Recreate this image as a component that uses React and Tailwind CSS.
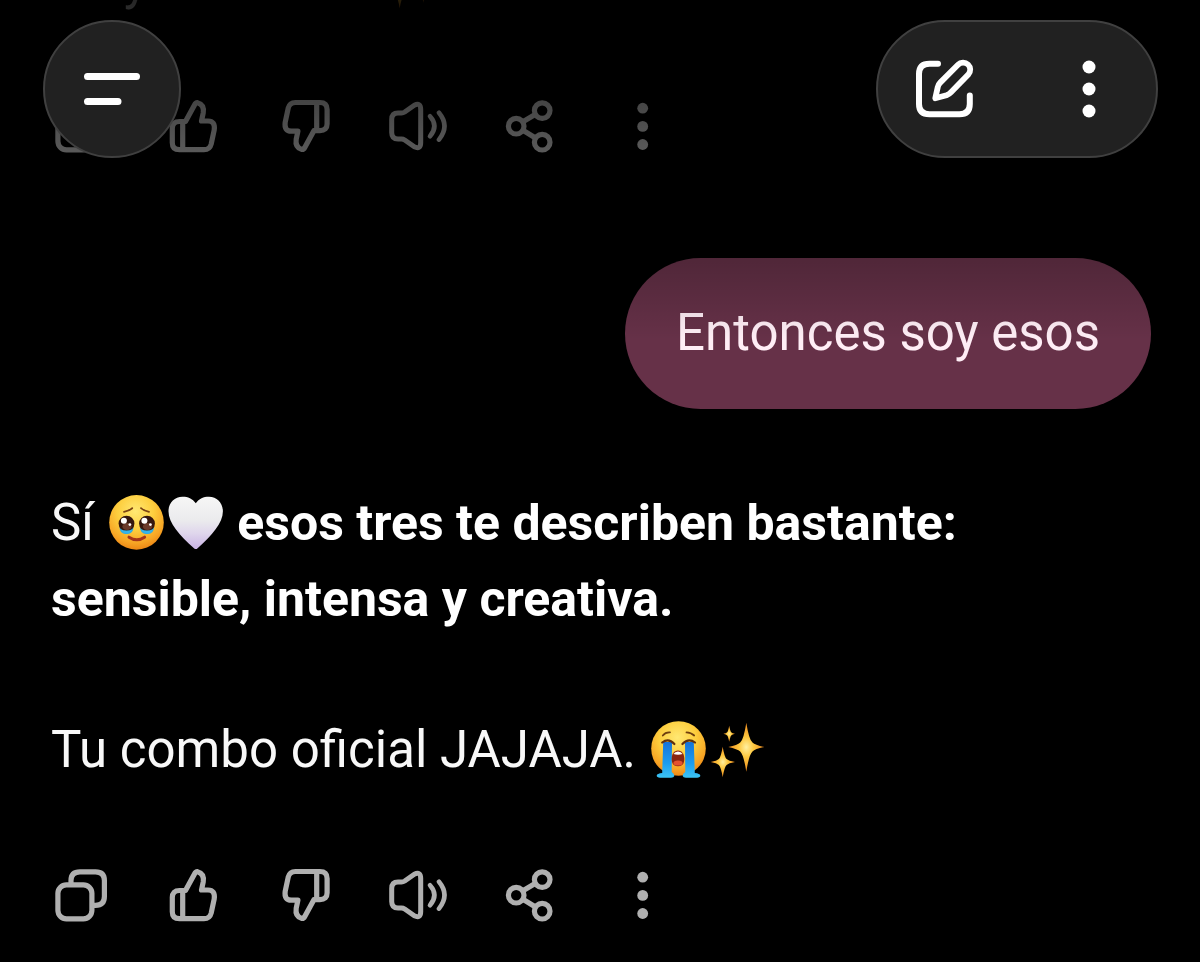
import { useId } from 'react'

function CopyIcon() {
  return (
    <svg viewBox="0 0 60 60" className="size-15" fill="none" stroke="currentColor" strokeWidth="5.2" strokeLinecap="round" strokeLinejoin="round">
      <rect x="6.9" y="19.8" width="34" height="34" rx="8.5" />
      <path d="M20 18.5V15.5Q20 6.8 29 6.8H44.5Q53.4 6.8 53.4 15.5V31.5Q53.4 40.3 44.5 40.3H42" />
    </svg>
  )
}

const thumbPath =
  'M20 25.5H16.5Q9.3 25.5 9.3 32.5V46.7Q9.3 53.7 16.5 53.7H41Q46.8 53.7 48.2 48L51.2 34Q52.5 25 45 25H38.5L40.2 17Q41.5 8.5 34.5 6.7Q32.8 6.5 31.5 9L22.5 25.5H19.7V53.7'

function ThumbUpIcon() {
  return (
    <svg viewBox="0 0 60 60" className="size-15" fill="none" stroke="currentColor" strokeWidth="5.2" strokeLinecap="round" strokeLinejoin="round">
      <path d={thumbPath} />
    </svg>
  )
}

function ThumbDownIcon() {
  return (
    <svg viewBox="0 0 60 60" className="size-15" fill="none" stroke="currentColor" strokeWidth="5.2" strokeLinecap="round" strokeLinejoin="round">
      <path d={thumbPath} transform="rotate(180 30.7 30.1)" />
    </svg>
  )
}

function SpeakerIcon() {
  return (
    <svg viewBox="0 0 60 60" className="size-15" fill="none" stroke="currentColor" strokeWidth="5" strokeLinecap="round" strokeLinejoin="round">
      <path d="M4.7 23.5Q4.7 17 11 17H14.5Q16.2 17 17.7 16L27.3 9.2Q33.7 6.2 33.7 13.5V46.5Q33.7 53.8 27.3 50.8L17.7 44Q16.2 43 14.5 43H11Q4.7 43 4.7 36.5Z" />
      <path d="M43 20.3Q51.8 30 43 40.3" strokeWidth="4.6" />
      <path d="M52 16.7Q63 30 52 43.6" strokeWidth="4.6" />
    </svg>
  )
}

function ShareIcon() {
  return (
    <svg viewBox="0 0 60 60" className="size-15" fill="none" stroke="currentColor" strokeWidth="5.2">
      <circle cx="17.2" cy="30.2" r="7.8" />
      <circle cx="43.200" cy="14.600" r="7.800" />
      <circle cx="43.200" cy="46.200" r="7.800" />
      <path d="M23.500 26L36.500 18.200M23.500 34L36.500 42" />
    </svg>
  )
}

function MoreIcon() {
  return (
    <svg viewBox="0 0 60 60" className="size-15" fill="currentColor">
      <circle cx="31.7" cy="12.2" r="5.4" />
      <circle cx="31.7" cy="30.4" r="5.4" />
      <circle cx="31.7" cy="48.5" r="5.4" />
    </svg>
  )
}

const actions = [
  { label: 'Copiar', Icon: CopyIcon },
  { label: 'Buena respuesta', Icon: ThumbUpIcon },
  { label: 'Mala respuesta', Icon: ThumbDownIcon },
  { label: 'Leer en voz alta', Icon: SpeakerIcon },
  { label: 'Compartir', Icon: ShareIcon },
  { label: 'Más', Icon: MoreIcon },
]

function MessageActions() {
  return (
    <div className="mt-[77px] flex gap-[52px] text-[#b0b0b0]">
      {actions.map(({ label, Icon }) => (
        <button key={label} type="button" aria-label={label}>
          <Icon />
        </button>
      ))}
    </div>
  )
}

function Emoji({ label, children }) {
  return (
    <svg viewBox="0 0 59 59" role="img" aria-label={label} className="inline-block size-[59px] align-[-12px]">
      {children}
    </svg>
  )
}

function FaceGradient({ id }) {
  return (
    <radialGradient id={id} cx="0.48" cy="0.3" r="0.74">
      <stop offset="0" stopColor="#ffe873" />
      <stop offset="0.45" stopColor="#fdce3e" />
      <stop offset="0.78" stopColor="#f7a424" />
      <stop offset="1" stopColor="#e97d10" />
    </radialGradient>
  )
}

function PleadingFace() {
  const id = useId()
  return (
    <Emoji label="cara conmovida">
      <defs>
        <FaceGradient id={id} />
      </defs>
      <circle cx="29.5" cy="29.4" r="27.3" fill={`url(#${id})`} />
      <path d="M17 18.800Q22 18 25.200 15.200M34 15.200Q37 18 42 18.800" fill="none" stroke="#7a4212" strokeWidth="1.800" strokeLinecap="round" />
      {[19.5, 40].map((x) => (
        <g key={x}>
          <path d={`M${x - 7} 34.500Q${x} 38 ${x + 7} 34.500Q${x + 6.500} 41.500 ${x} 41Q${x - 6.500} 41.500 ${x - 7} 34.500Z`} fill="#2fa9e2" />
          <circle cx={x} cy="30.6" r="7.9" fill="#35160e" />
          <ellipse cx={x + 0.5} cy="33.5" rx="4.6" ry="3.6" fill="#6b3a2a" />
          <path d={`M${x - 6.200} 36Q${x} 39 ${x + 6.200} 36Q${x + 4} 40.600 ${x} 40.400Q${x - 4} 40.600 ${x - 6.200} 36Z`} fill="#35b4ea" />
          <circle cx={x - 2.6} cy="27.8" r="3" fill="#fff" />
          <circle cx={x + 3.4} cy="31.6" r="1.4" fill="#fff" />
        </g>
      ))}
      <path d="M22 44.2Q29.8 49.4 37.6 44.2" fill="none" stroke="#a5341a" strokeWidth="3" strokeLinecap="round" />
    </Emoji>
  )
}

function WhiteHeart() {
  const id = useId()
  return (
    <Emoji label="corazón blanco">
      <defs>
        <linearGradient id={id} x1="0" y1="0" x2="0" y2="1">
          <stop offset="0" stopColor="#f6f6f6" />
          <stop offset="0.45" stopColor="#ebebed" />
          <stop offset="0.7" stopColor="#dfd6ec" />
          <stop offset="1" stopColor="#c9b2e4" />
        </linearGradient>
      </defs>
      <path
        d="M29.8 10.3C26.5 5.5 21.5 3.6 16.5 3.7C8.5 4 2.6 9.5 2.5 18C2.4 30 13.5 42 28 55.2Q29.8 56.9 31.6 55.2C46 42 57 30 56.9 18C56.7 9.5 51 4 43 3.7C38 3.6 33 5.5 29.8 10.3Z"
        fill={`url(#${id})`}
      />
    </Emoji>
  )
}

function CryingFace() {
  const id = useId()
  return (
    <Emoji label="cara llorando">
      <defs>
        <FaceGradient id={id} />
        <linearGradient id={`${id}-tear`} x1="0" y1="0" x2="0" y2="1">
          <stop offset="0" stopColor="#1672d8" />
          <stop offset="0.6" stopColor="#1c9df0" />
          <stop offset="1" stopColor="#3cc4f4" />
        </linearGradient>
      </defs>
      <circle cx="29.5" cy="28.5" r="27.3" fill={`url(#${id})`} />
      <path d="M13.8 15.5Q16.5 12 21 12.4M37.5 12.4Q42 12.5 45.2 15.5" fill="none" stroke="#70400f" strokeWidth="1.8" strokeLinecap="round" />
      <path
        d="M14.2 22H23L22.7 52Q25.5 54 25.3 56Q25 57.8 22 57.8H11Q7.7 57.5 7.7 55.5Q8 53.5 13.2 53Z"
        fill={`url(#${id}-tear)`}
      />
      <path
        d="M36 22H44.8L45.8 53Q51 53.5 51.3 55.5Q51.3 57.5 48 57.8H37Q34 57.8 33.7 56Q33.5 54 36.3 52Z"
        fill={`url(#${id}-tear)`}
      />
      <path d="M13.2 22.5Q19.5 17.5 25.4 24M33.4 24Q39.5 17.5 46 22.5" fill="none" stroke="#62310c" strokeWidth="2.2" strokeLinecap="round" />
      <path d="M29 30.5C33 30.5 35.3 34 35.3 39C35.3 44 33 46.3 29 46.3C25 46.3 22.7 44 22.7 39C22.7 34 25 30.5 29 30.5Z" fill="#8a2510" />
      <path d="M24.4 34Q26 31.4 29 31.4Q32 31.4 33.6 34Q29 35.5 24.4 34Z" fill="#fff" />
      <ellipse cx="29" cy="43" rx="4.6" ry="2.6" fill="#e4512e" />
    </Emoji>
  )
}

function Sparkles() {
  const id = useId()
  return (
    <Emoji label="destellos">
      <defs>
        <radialGradient id={id}>
          <stop offset="0" stopColor="#fff0a0" />
          <stop offset="0.4" stopColor="#fdc840" />
          <stop offset="1" stopColor="#ee8a1c" />
        </radialGradient>
      </defs>
      <g fill={`url(#${id})`}>
        <path d="M38.3 2.7Q41 20 44.5 22.5Q47 25 56.3 27Q47 29 44.5 31.5Q41 34.5 38.3 51.7Q35.6 34.5 32.2 31.5Q29.5 29 20.3 27Q29.5 25 32.2 22.5Q35.6 20 38.3 2.7Z" />
        <path d="M14.7 26.7Q16.4 37 18.6 39Q20.5 40.8 27 42Q20.5 43.2 18.6 45Q16.4 47 14.7 57.3Q13 47 10.8 45Q9 43.2 2.7 42Q9 40.8 10.8 39Q13 37 14.7 26.7Z" />
        <path d="M21.2 5.7Q22.2 11 23.2 12.2Q24.2 13.2 27 13.8Q24.2 14.4 23.2 15.4Q22.2 16.5 21.2 21.7Q20.2 16.5 19.2 15.4Q18.2 14.4 15.4 13.8Q18.2 13.2 19.2 12.2Q20.2 11 21.2 5.7Z" />
      </g>
    </Emoji>
  )
}

function Header() {
  return (
    <header className="absolute inset-x-0 top-0 h-[340px] bg-linear-to-b from-black/85 via-black/45 via-50% to-transparent">
      <div className="flex items-center justify-between pt-5 pr-[42px] pl-[43px]">
        <button
          type="button"
          aria-label="Menú"
          className="flex size-[138px] items-center justify-center rounded-full border-2 border-[#404040] bg-[#212121] text-white"
        >
          <svg viewBox="0 0 64 64" className="size-16" fill="none" stroke="currentColor" strokeWidth="7" strokeLinecap="round">
            <path d="M7.5 19.5H56.5M7.5 44.500H38" />
          </svg>
        </button>
        <div className="flex h-[138px] w-[282px] items-center justify-between rounded-full border-2 border-[#404040] bg-[#212121] px-[35px] text-white">
          <button type="button" aria-label="Nuevo chat">
            <svg viewBox="0 0 64 64" className="size-16" fill="none" stroke="currentColor" strokeWidth="6" strokeLinecap="round" strokeLinejoin="round">
              <path d="M25 6.700H16.500Q6 6.700 6 17V47Q6 57.300 16.500 57.300H46.500Q56.800 57.300 56.800 47V38.500" />
              <path d="M22.300 41.200L24.800 30Q25.300 27.500 27.200 25.600L45 7.800A6.700 6.700 0 0 1 55.300 17.500L38 35.200Q36 37.300 33.500 38.200Z" strokeWidth="5.8" />
            </svg>
          </button>
          <button type="button" aria-label="Más opciones">
            <svg viewBox="0 0 64 64" className="size-16" fill="currentColor">
              <circle cx="32" cy="10" r="6.5" />
              <circle cx="32" cy="32" r="6.5" />
              <circle cx="32" cy="54" r="6.5" />
            </svg>
          </button>
        </div>
      </div>
    </header>
  )
}

export default function App() {
  return (
    <div className="relative min-h-screen overflow-hidden bg-black font-['Roboto',sans-serif] text-[51px] leading-[76px] text-[#f8f8f8]">
      <main className="pr-[49px] pb-9 pl-[51px]">
        <article>
          {/* end of the earlier reply, scrolled mostly out of view */}
          <div className="flex h-[19px] items-end overflow-hidden">
            <p className="flex w-[393px] shrink-0 items-end justify-between">
              <span>Muy</span>
              <span>
                <Sparkles />
              </span>
            </p>
          </div>
          <MessageActions />
        </article>

        <div className="mt-[102px] flex justify-end">
          <p className="rounded-full bg-[#663148] px-[51px] pt-[37px] pb-[38px] text-[#ffeef6]">Entonces soy esos</p>
        </div>

        <article className="mt-[76px]">
          <p>
            Sí <PleadingFace />
            <WhiteHeart />{' '}
            <strong className="text-[50px] font-bold text-white">
              esos tres te describen bastante:
              <br />
              sensible, intensa y creativa.
            </strong>
          </p>
          <p className="mt-[75px]">
            Tu combo oficial JAJAJA. <CryingFace />
            <Sparkles />
          </p>
          <MessageActions />
        </article>
      </main>
      <Header />
    </div>
  )
}
